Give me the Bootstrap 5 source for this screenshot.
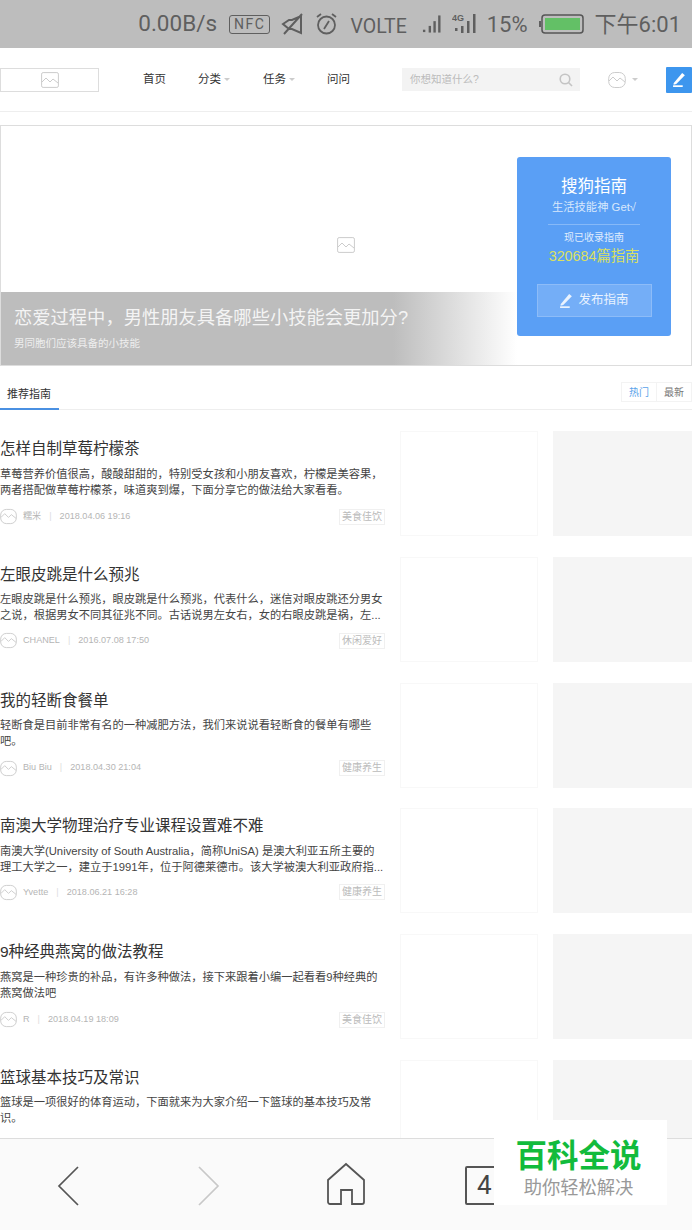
<!DOCTYPE html>
<html lang="zh"><head><meta charset="utf-8"><title>搜狗指南</title>
<link href="https://cdn.jsdelivr.net/npm/bootstrap@5.3.0/dist/css/bootstrap.min.css" rel="stylesheet">
<style>
html,body{height:1230px;overflow:hidden}
body{font-family:"Liberation Sans","Noto Sans CJK SC",sans-serif;background:#fff;color:#333;position:relative}
svg{display:block;flex:none}
.stat{height:48px;background:#bdbdbd;color:#5f5f5f;font-size:22px;font-family:Roboto,"Noto Sans CJK SC",sans-serif;padding-right:11px;gap:11px}
.spd{font-size:22.5px;margin-right:1px}
.nfc{border:1.5px solid #5f5f5f;border-radius:3px;font-size:14px;line-height:17px;padding:0 4px;letter-spacing:1.5px}
.volte{font-size:19.5px;margin-right:4px;margin-left:1px;padding-top:5px}
.page{height:1090px;overflow:hidden}
.topnav{height:64px;border-bottom:1px solid #eee;margin-bottom:13px}
.logobox{width:99px;height:24px;border:1px solid #ddd;margin-right:44px}
.nv{font-size:11.5px;color:#333;flex:none}
.nv1{width:55px}.nv2{width:65px}.nv3{width:64px}
.nv i{display:inline-block;border:3px solid transparent;border-top:3px solid #ccc;border-bottom:0;margin-left:3px;vertical-align:2px}
.srch{width:178px;height:23px;background:#f3f3f3;color:#bbb;font-size:10.5px;padding:0 7px 0 8px;margin-left:10px}
.usr{width:86px;padding-left:28px;gap:6px}
.usr i{display:block;border:3px solid transparent;border-top:3px solid #ccc;border-bottom:0}
.pen{width:26px;height:26px;background:#3d96ee;border-radius:1px}
.hero{height:241px;border:1px solid #ddd;position:relative}
.imgmid{height:238px}
.cap{position:absolute;left:0;bottom:0;width:516px;height:73px;background:linear-gradient(90deg,#bdbdbd 0,#bdbdbd 76%,rgba(189,189,189,0) 100%);color:#f4f4f4;padding:12px 0 0 13px}
.cap b{display:block;font-weight:400;font-size:18.3px;line-height:28px}
.cap span{display:block;font-size:10.5px;line-height:14px;margin-top:4px;color:#eee}
.side{position:absolute;left:516px;top:31px;width:154px;height:179px;background:#5a9ff5;border-radius:3px;color:#fff;text-align:center;padding-top:18px}
.side .t1{font-size:16.5px;line-height:22px}
.side .t2{font-size:11.3px;line-height:14px;color:#d8e8fc;margin-top:3px}
.side hr{margin:10px 31px 6px;border-color:#86b9f8;opacity:1}
.side .t3{font-size:10px;line-height:14px;color:#e0edfd}
.side .t4{font-size:14.3px;line-height:20px;color:#dbe05e;margin-top:1px}
.pub{margin:18px auto 0;width:115px;height:33px;background:#74aef7;border:1px solid #8dbcf8;font-size:12.5px;gap:4px;color:#eaf3fe}
.tabs{height:44px;border-bottom:1px solid #eee;margin-bottom:21px}
.tab1{font-size:11px;color:#333;height:44px;width:59px;padding:20px 0 0 7px;border-bottom:2px solid #4a90e2;margin-bottom:-1px;line-height:16px}
.sort{font-size:10px;margin-bottom:7px}
.sort span{border:1px solid #f3f3f3;padding:2px 7px;line-height:15px;height:20px;color:#777;display:block}
.sort .on{color:#5aa2ea;border-right:0}
.item{height:125.8px;gap:15px}
.txt{width:385px;flex:none}
.ttl{font-size:15.5px;line-height:20px;color:#333;padding-top:8px}
.dsc{font-size:11.25px;line-height:16px;color:#444;height:32px;margin-top:6.5px;overflow:hidden;white-space:pre}
.meta{font-size:9.1px;color:#b5b5b5;margin-top:10px;height:18px}
.meta2{margin-top:8.5px}
.meta .nm{margin-left:6px}
.meta .sp{margin:0 8px;color:#ddd}
.tagx{margin-left:auto;border:1px solid #f0f0f0;padding:0 2px;font-size:10px;line-height:14px;height:16px;color:#bbb}
.b1{width:138px;height:105px;border:1px solid #f8f8f8;flex:none}
.b2{width:139px;height:105px;background:#f5f5f5;flex:none}
.bbar{height:92px;background:#fafafa;border-top:1px solid #ddd;position:relative}
.bbar svg{position:absolute}
.cnt{position:absolute;left:465px;top:27px;width:40px;height:39px;border:2px solid #555;border-radius:2px;font:26px/35px Roboto,sans-serif;color:#444;padding-left:10px}
.wm{position:absolute;left:494px;top:1120px;width:173px;height:85px;background:#fff;text-align:center;padding:18px 4px 0 0}
.wm b{display:block;font-size:31.5px;line-height:36px;color:#12bb3c;font-weight:700}
.wm span{display:block;font-size:18.3px;line-height:22px;color:#999;margin-top:3px}
</style></head><body>
<svg width="0" height="0" style="position:absolute"><defs>
<symbol id="pic" viewBox="0 0 18 16"><rect x=".6" y=".6" width="16.8" height="14.8" rx="1.5" fill="none" stroke="#ccc"/><path d="M1 10l4-4 4 4 3-3 5 4" fill="none" stroke="#ccc"/></symbol>
<symbol id="ava" viewBox="0 0 18 18"><rect x=".7" y="1.5" width="16.6" height="15" rx="6" fill="none" stroke="#ccc"/><path d="M1 10l4-4 4 4 3-3 5 4" fill="none" stroke="#ccc"/></symbol>
<symbol id="pn" viewBox="0 0 14 14"><path d="M1 13.2h9" stroke="currentColor" stroke-width="1.6" fill="none"/><path d="M1.5 10.5L9.5 1l2.5 2L4 11.2l-2.5.6z" fill="currentColor"/></symbol>
</defs></svg>

<div class="stat d-flex align-items-center justify-content-end">
<span class="spd">0.00B/s</span><span class="nfc">NFC</span>
<svg width="23" height="24" viewBox="0 0 23 24" fill="none" stroke="#5f5f5f" stroke-width="2"><path d="M2 12l6-4h3l9-4v17l-9-4H8zM3 22L21 2"/></svg>
<svg width="23" height="24" viewBox="0 0 23 24" fill="none" stroke="#5f5f5f" stroke-width="1.8"><circle cx="11.5" cy="13" r="8.5"/><path d="M9 17l5-8M2 5l4-3M21 5l-4-3"/></svg>
<span class="volte">VOLTE</span>
<svg width="19" height="20" viewBox="0 0 20 20" fill="#5f5f5f"><rect x="1" y="16" width="2.5" height="2.5"/><rect x="7" y="12" width="2.5" height="7"/><rect x="12" y="7" width="2.5" height="12"/><rect x="17" y="1" width="2.5" height="18"/></svg>
<svg width="24" height="22" viewBox="0 0 24 22" fill="#5f5f5f"><text x="0" y="8" font-family="Liberation Sans,sans-serif" font-size="9" font-weight="700">4G</text><rect x="3" y="15" width="2.5" height="3"/><rect x="9" y="13" width="2.5" height="7"/><rect x="15" y="8" width="2.5" height="12"/><rect x="21" y="1" width="2.5" height="19"/></svg>
<span>15%</span>
<svg width="45" height="20" viewBox="0 0 45 20"><rect x="0" y="7" width="2" height="6" fill="#5f5f5f"/><rect x="3" y="1" width="41" height="18" rx="3" fill="none" stroke="#555" stroke-width="1.5"/><rect x="6" y="4" width="35" height="12" fill="#63c066"/></svg>
<span>下午6:01</span>
</div>

<div class="page">
<div class="topnav d-flex align-items-center">
<div class="logobox d-flex align-items-center justify-content-center"><svg width="18" height="16"><use href="#pic"/></svg></div>
<div class="nv nv1">首页</div><div class="nv nv2">分类<i></i></div><div class="nv nv3">任务<i></i></div><div class="nv">问问</div>
<div class="srch d-flex align-items-center justify-content-between ms-auto"><span>你想知道什么?</span><svg width="14" height="14" viewBox="0 0 14 14" fill="none" stroke="#c4c4c4" stroke-width="1.6"><circle cx="6" cy="6" r="4.8"/><path d="M9.5 9.5L13 13"/></svg></div>
<div class="usr d-flex align-items-center"><svg width="18" height="18"><use href="#ava"/></svg><i></i></div>
<div class="pen d-flex align-items-center justify-content-center text-white"><svg width="15" height="15"><use href="#pn"/></svg></div>
</div>

<div class="hero">
<div class="imgmid d-flex align-items-center justify-content-center"><svg width="18" height="16"><use href="#pic"/></svg></div>
<div class="cap"><b>恋爱过程中，男性朋友具备哪些小技能会更加分?</b><span>男同胞们应该具备的小技能</span></div>
<div class="side">
<div class="t1">搜狗指南</div><div class="t2">生活技能神 Get√</div>
<hr>
<div class="t3">现已收录指南</div><div class="t4">320684篇指南</div>
<div class="pub d-flex align-items-center justify-content-center"><svg width="15" height="15"><use href="#pn"/></svg>发布指南</div>
</div>
</div>

<div class="tabs d-flex justify-content-between align-items-end">
<div class="tab1">推荐指南</div>
<div class="sort d-flex"><span class="on">热门</span><span>最新</span></div>
</div>

<div class="item d-flex"><div class="txt"><div class="ttl">怎样自制草莓柠檬茶</div><div class="dsc">草莓营养价值很高，酸酸甜甜的，特别受女孩和小朋友喜欢，柠檬是美容果，
两者搭配做草莓柠檬茶，味道爽到爆，下面分享它的做法给大家看看。</div><div class="meta d-flex align-items-center"><svg width="17" height="17"><use href="#ava"/></svg><span class="nm">糯米</span><span class="sp">|</span><span>2018.04.06 19:16</span><span class="tagx">美食佳饮</span></div></div><div class="b1"></div><div class="b2"></div></div>

<div class="item d-flex"><div class="txt"><div class="ttl">左眼皮跳是什么预兆</div><div class="dsc">左眼皮跳是什么预兆，眼皮跳是什么预兆，代表什么，迷信对眼皮跳还分男女
之说，根据男女不同其征兆不同。古话说男左女右，女的右眼皮跳是祸，左...</div><div class="meta meta2 d-flex align-items-center"><svg width="17" height="17"><use href="#ava"/></svg><span class="nm">CHANEL</span><span class="sp">|</span><span>2016.07.08 17:50</span><span class="tagx">休闲爱好</span></div></div><div class="b1"></div><div class="b2"></div></div>

<div class="item d-flex"><div class="txt"><div class="ttl">我的轻断食餐单</div><div class="dsc">轻断食是目前非常有名的一种减肥方法，我们来说说看轻断食的餐单有哪些
吧。</div><div class="meta d-flex align-items-center"><svg width="17" height="17"><use href="#ava"/></svg><span class="nm">Biu Biu</span><span class="sp">|</span><span>2018.04.30 21:04</span><span class="tagx">健康养生</span></div></div><div class="b1"></div><div class="b2"></div></div>

<div class="item d-flex"><div class="txt"><div class="ttl">南澳大学物理治疗专业课程设置难不难</div><div class="dsc">南澳大学(University of South Australia，简称UniSA) 是澳大利亚五所主要的
理工大学之一，建立于1991年，位于阿德莱德市。该大学被澳大利亚政府指...</div><div class="meta meta2 d-flex align-items-center"><svg width="17" height="17"><use href="#ava"/></svg><span class="nm">Yvette</span><span class="sp">|</span><span>2018.06.21 16:28</span><span class="tagx">健康养生</span></div></div><div class="b1"></div><div class="b2"></div></div>

<div class="item d-flex"><div class="txt"><div class="ttl">9种经典燕窝的做法教程</div><div class="dsc">燕窝是一种珍贵的补品，有许多种做法，接下来跟着小编一起看看9种经典的
燕窝做法吧</div><div class="meta d-flex align-items-center"><svg width="17" height="17"><use href="#ava"/></svg><span class="nm">R</span><span class="sp">|</span><span>2018.04.19 18:09</span><span class="tagx">美食佳饮</span></div></div><div class="b1"></div><div class="b2"></div></div>

<div class="item d-flex"><div class="txt"><div class="ttl">篮球基本技巧及常识</div><div class="dsc">篮球是一项很好的体育运动，下面就来为大家介绍一下篮球的基本技巧及常
识。</div></div><div class="b1"></div><div class="b2"></div></div>
</div>

<div class="bbar">
<svg style="left:57px;top:27px" width="22" height="40" viewBox="0 0 22 40" fill="none" stroke="#555" stroke-width="1.7"><path d="M21 1L2 20l19 19"/></svg>
<svg style="left:198px;top:27px" width="22" height="40" viewBox="0 0 22 40" fill="none" stroke="#c8c8c8" stroke-width="1.7"><path d="M1 1l19 19L1 39"/></svg>
<svg style="left:326px;top:23px" width="40" height="44" viewBox="0 0 40 44" fill="none" stroke="#555" stroke-width="1.8"><path d="M2 18L20 2l18 16v22a2 2 0 0 1-2 2H26V28H15v14H4a2 2 0 0 1-2-2z"/></svg>
<div class="cnt">4</div>
</div>
<div class="wm"><b>百科全说</b><span>助你轻松解决</span></div>
<script src="https://cdn.jsdelivr.net/npm/bootstrap@5.3.0/dist/js/bootstrap.bundle.min.js"></script>
</body></html>
